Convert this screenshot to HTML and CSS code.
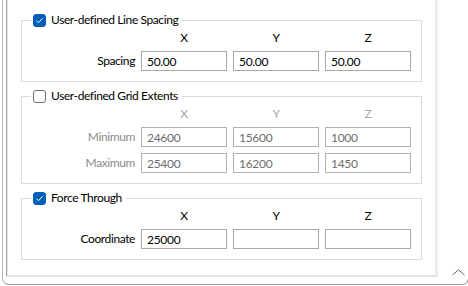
FILE: index.html
```html
<!DOCTYPE html>
<html lang="en">
<head>
    <meta charset="UTF-8">
    <title>Grid Options</title>
    <link rel="stylesheet" href="styles.css">
</head>
<body>
    <div class="window">
        <div class="panel">
            <fieldset class="group">
                <legend class="legend">
                    <span class="check on"><svg width="13" height="13" viewBox="0 0 13 13"><path d="M3.5 6.8 L5.5 8.6 L9.5 4.4" fill="none" stroke="#fff" stroke-width="1"/></svg></span>
                    User-defined Line Spacing
                </legend>
                <div class="grid">
                    <span></span>
                    <span class="head">X</span>
                    <span class="head">Y</span>
                    <span class="head">Z</span>
                    <label class="lbl">Spacing</label>
                    <input class="field" type="text" value="50.00">
                    <input class="field" type="text" value="50.00">
                    <input class="field" type="text" value="50.00">
                </div>
            </fieldset>

            <fieldset class="group off">
                <legend class="legend">
                    <span class="check"></span>
                    User-defined Grid Extents
                </legend>
                <div class="grid">
                    <span></span>
                    <span class="head">X</span>
                    <span class="head">Y</span>
                    <span class="head">Z</span>
                    <label class="lbl">Minimum</label>
                    <input class="field" type="text" value="24600" disabled>
                    <input class="field" type="text" value="15600" disabled>
                    <input class="field" type="text" value="1000" disabled>
                    <label class="lbl">Maximum</label>
                    <input class="field" type="text" value="25400" disabled>
                    <input class="field" type="text" value="16200" disabled>
                    <input class="field" type="text" value="1450" disabled>
                </div>
            </fieldset>

            <fieldset class="group">
                <legend class="legend">
                    <span class="check on"><svg width="13" height="13" viewBox="0 0 13 13"><path d="M3.5 6.8 L5.5 8.6 L9.5 4.4" fill="none" stroke="#fff" stroke-width="1"/></svg></span>
                    Force Through
                </legend>
                <div class="grid">
                    <span></span>
                    <span class="head">X</span>
                    <span class="head">Y</span>
                    <span class="head">Z</span>
                    <label class="lbl">Coordinate</label>
                    <input class="field" type="text" value="25000">
                    <input class="field" type="text" value="">
                    <input class="field" type="text" value="">
                </div>
            </fieldset>
        </div>
        <div class="scroll">
            <svg class="chevron" width="13" height="7" viewBox="0 0 13 7"><path d="M0.5 6 L6.5 0.8 L12.5 6" fill="none" stroke="#666" stroke-width="1"/></svg>
        </div>
    </div>
</body>
</html>
```

FILE: styles.css
```css
* {
    margin: 0;
    padding: 0;
    box-sizing: border-box;
}

body {
    font-family: 'Segoe UI', 'Lato', sans-serif;
    font-size: 12px;
    letter-spacing: -0.4px;
    color: #000;
    background: #fff;
    width: 468px;
    height: 286px;
    overflow: hidden;
}

.window {
    display: flex;
    width: 467px;
    height: 285px;
    margin-left: 2px;
    border-left: 1px solid #b4b4b4;
    border-right: 1px solid #8c8c8c;
    border-bottom: 1px solid #9a9a9a;
    border-radius: 0 0 7px 7px;
    padding-left: 3px;
}

.panel {
    width: 432px;
    height: 277px;
    border-left: 1px solid #a8a8a8;
    border-right: 3px solid #ececec;
    border-bottom: 2px solid #e4e4e4;
    box-shadow: inset 1px 0 0 #e6e6e6;
    padding: 12px 12px 0 14px;
}

.group {
    width: 401px;
    border: 1px solid #dcdcdc;
    padding: 0 0 10px 0;
    margin-bottom: 6px;
}

.legend {
    display: flex;
    align-items: center;
    margin-left: 9px;
    padding: 0 4px 0 2px;
    height: 16px;
    line-height: 16px;
}

.check {
    width: 13px;
    height: 13px;
    border: 1px solid #6e6e6e;
    border-radius: 3px;
    margin-right: 5px;
    background: #fff;
}

.check.on {
    background: #005fb8;
    border-color: #005fb8;
}

.check svg {
    display: block;
    margin: -1px;
}

.grid {
    display: grid;
    grid-template-columns: 113px 86px 86px 86px;
    column-gap: 6px;
    row-gap: 6px;
    align-items: center;
    padding-top: 2px;
}

.head {
    text-align: center;
    line-height: 16px;
    margin-bottom: -1px;
}

.lbl {
    text-align: right;
    line-height: 20px;
}

.field {
    height: 20px;
    border: 1px solid #a9a9a9;
    font-family: inherit;
    font-size: 12px;
    letter-spacing: -0.3px;
    padding: 0 5px;
    color: #000;
    background: #fff;
    outline: none;
}

.off .head {
    color: #a6a6a6;
}

.off .lbl {
    color: #8a8a8a;
}

.off .field {
    color: #6d6d6d;
    border-color: #b0b0b0;
}

.scroll {
    flex: 1;
    display: flex;
    align-items: flex-end;
    justify-content: flex-end;
    padding: 0 3px 8px 0;
}
```
